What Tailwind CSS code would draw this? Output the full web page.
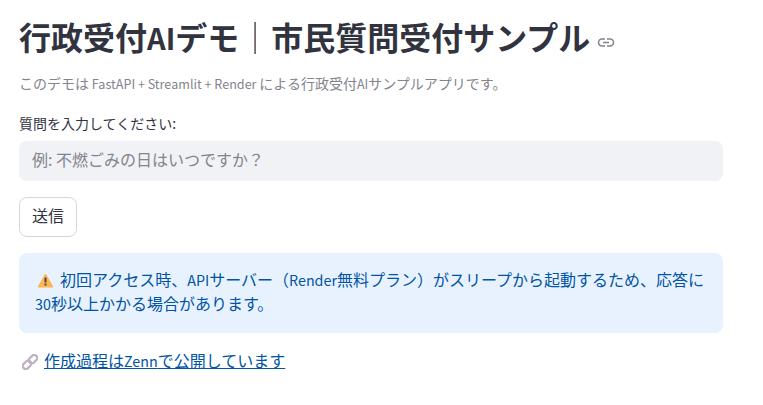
<!DOCTYPE html>
<html lang="ja"><head><meta charset="utf-8"><title>行政受付AIデモ</title><script src="https://cdn.jsdelivr.net/npm/@tailwindcss/browser@4"></script></head>
<body class="bg-white text-[#31333f] font-['Noto_Sans_CJK_JP',sans-serif]">
<main class="w-[704px] ml-[19px] whitespace-nowrap">
<div class="flex items-center h-[63px] pt-[10px]"><h1 class="text-[32px] leading-[53px] font-bold">行政受付<span class="text-[0.91em] leading-none">AI</span>デモ<span class="bg-[linear-gradient(to_right,#c87a35_1px,#3c78bd_1px)] bg-[length:2px_32px] bg-[position:15px_9px] bg-no-repeat text-transparent">｜</span>市民質問受付サンプル</h1>
<svg class="ml-[7px] mt-[12px]" width="18" height="18" viewBox="0 0 18 18" fill="none" stroke="#83848c" stroke-width="1.5"><path d="M8 5H5a3.5 3.5 0 0 0 0 7h3M10 5h3a3.5 3.5 0 0 1 0 7h-3M6 8.5h6"/></svg></div>
<p class="h-[22px] text-[14px] leading-[22px] mt-[9px] text-[#83848c]">このデモは<span class="text-[0.9em] leading-none"> FastAPI + Streamlit + Render </span>による行政受付<span class="text-[0.895em] leading-none">AI</span>サンプルアプリです。</p>
<label class="block text-[14px] leading-[22px] mt-[18px]">質問を入力してください:</label>
<div class="mt-[7px] h-10 rounded-lg bg-[#f0f2f6] px-[13px] text-[16px] leading-[36px] text-[#83848c]">例: 不燃ごみの日はいつですか？</div>
<button class="block mt-4 h-10 w-[58px] rounded-lg border border-[#d6d6d9] text-[16px] leading-6 pb-[4px]">送信</button>
<div class="mt-4 h-20 rounded-lg bg-[#e8f2ff] px-4 pt-[14px] text-[16px] leading-6 text-[#0054a3]"><svg class="inline-block ml-[2px] mr-[6px] align-[-2px]" width="17" height="15" viewBox="0 0 17 15"><path d="M8.5 1 L16 14 H1Z" fill="#ffb64f" stroke="#ffb64f" stroke-linejoin="round"/><path d="M8.5 4.5v5M8.5 10.5v2" stroke="#494653" stroke-width="2"/></svg>初回アクセス時、<span class="text-[0.895em] leading-none">API</span>サーバー（<span class="text-[0.895em] leading-none">Render</span>無料プラン）がスリープから起動するため、応答に<br><span class="text-[0.895em] leading-none">30</span>秒以上かかる場合があります。</div>
<p class="mt-[15px] text-[16px] leading-6"><svg class="inline-block ml-[3px] mr-[6px] align-[-3px]" width="16" height="16" viewBox="0 0 16 16" fill="none" stroke="#bdb2c4" stroke-width="2.2"><rect x="6.3" y="2.2" width="9.4" height="6" rx="3" transform="rotate(-45 11 5.2)"/><rect x=".3" y="7.8" width="9.4" height="6" rx="3" transform="rotate(-45 5 10.8)"/></svg><a class="underline text-[#0054a3]">作成過程は<span class="text-[0.895em] leading-none">Zenn</span>で公開しています</a></p>
</main></body></html>
